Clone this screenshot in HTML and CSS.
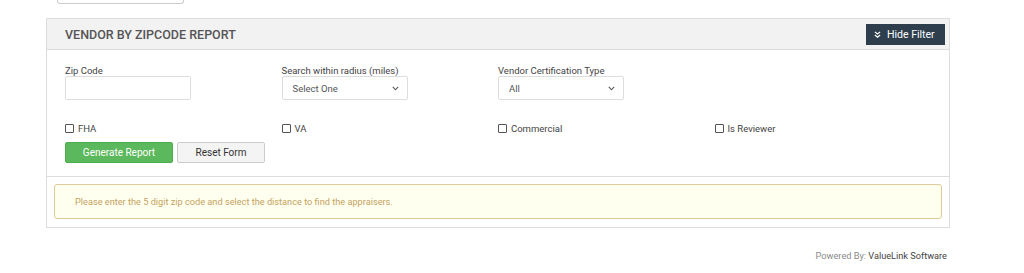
FILE: index.html
```html
<!DOCTYPE html>
<html lang="en">
<head>
<meta charset="UTF-8">
<meta name="viewport" content="width=device-width, initial-scale=1.0">
<title>Vendor By Zipcode Report</title>
<link rel="stylesheet" href="styles.css">
</head>
<body>

<div class="topbox"></div>

<div class="panel">
  <div class="panel-head">
    <div class="titulo">VENDOR BY ZIPCODE REPORT</div>
    <a href="#" class="btn-filtro">
      <svg width="7" height="7" viewBox="0 0 8 8"><path d="M1 1 L4 3.5 L7 1 M1 4.5 L4 7 L7 4.5" fill="none" stroke="#fff" stroke-width="1.4"/></svg>
      Hide Filter
    </a>
  </div>

  <div class="panel-body">
    <div class="fila">
      <div class="campo">
        <label>Zip Code</label>
        <input type="text" class="control">
      </div>
      <div class="campo">
        <label>Search within radius (miles)</label>
        <div class="control select">Select One
          <svg width="7" height="5" viewBox="0 0 7 5"><path d="M0.8 0.8 L3.5 3.8 L6.2 0.8" fill="none" stroke="#555" stroke-width="1.1"/></svg>
        </div>
      </div>
      <div class="campo">
        <label>Vendor Certification Type</label>
        <div class="control select">All
          <svg width="7" height="5" viewBox="0 0 7 5"><path d="M0.8 0.8 L3.5 3.8 L6.2 0.8" fill="none" stroke="#555" stroke-width="1.1"/></svg>
        </div>
      </div>
      <div class="campo"></div>
    </div>

    <div class="fila checks">
      <label class="check"><span class="caja"></span>FHA</label>
      <label class="check"><span class="caja"></span>VA</label>
      <label class="check"><span class="caja"></span>Commercial</label>
      <label class="check"><span class="caja"></span>Is Reviewer</label>
    </div>

    <div class="botones">
      <a href="#" class="boton verde">Generate Report</a>
      <a href="#" class="boton gris">Reset Form</a>
    </div>
  </div>

  <div class="panel-foot">
    <div class="aviso">Please enter the 5 digit zip code and select the distance to find the appraisers.</div>
  </div>
</div>

<div class="pie">Powered By: <span>ValueLink Software</span></div>

</body>
</html>
```

FILE: styles.css
```css
body {
  margin: 0;
  padding: 0;
  background: #fff;
  font-family: Roboto, "Liberation Sans", Arial, sans-serif;
  color: #444;
}

.topbox {
  margin-left: 57px;
  width: 125px;
  height: 3px;
  border: 1px solid #ccc;
  border-top: none;
  border-radius: 0 0 3px 3px;
}

.panel {
  margin: 14px 0 0 46px;
  width: 902px;
  border: 1px solid #ddd;
}

.panel-head {
  height: 30px;
  background-color: #f2f2f2;
  border-bottom: 1px solid #ddd;
  display: flex;
  justify-content: space-between;
  align-items: center;
  padding: 0 4px 0 18px;
}

.titulo {
  font-size: 12.5px;
  font-weight: 500;
  color: #555;
  padding-top: 1px;
}

.btn-filtro {
  display: flex;
  align-items: center;
  gap: 6px;
  height: 21px;
  width: 79px;
  box-sizing: border-box;
  padding-left: 8px;
  background-color: #2e3e4d;
  color: #fff;
  font-size: 10.5px;
  text-decoration: none;
  margin-top: 1px;
}

.panel-body {
  padding: 15px 18px 13px 18px;
  border-bottom: 1px solid #ddd;
}

.fila {
  display: grid;
  grid-template-columns: repeat(4, 1fr);
}

.campo label {
  display: block;
  font-size: 9.5px;
  color: #444;
  height: 11px;
  line-height: 11px;
}

.control {
  box-sizing: border-box;
  width: 126px;
  height: 24px;
  border: 1px solid #ddd;
  border-radius: 2px;
  background: #fff;
  font-family: inherit;
  font-size: 9.5px;
  color: #555;
  margin: 0;
}

.select {
  display: flex;
  justify-content: space-between;
  align-items: center;
  padding: 0 8px 0 10px;
}

.checks {
  margin-top: 23px;
}

.check {
  display: flex;
  align-items: center;
  gap: 4px;
  font-size: 9.5px;
  color: #444;
  height: 11px;
}

.caja {
  width: 7px;
  height: 7px;
  border: 1px solid #555;
  border-radius: 1px;
}

.botones {
  display: flex;
  gap: 4px;
  margin-top: 8px;
}

.boton {
  box-sizing: border-box;
  height: 21px;
  display: flex;
  align-items: center;
  justify-content: center;
  font-size: 10px;
  border-radius: 2px;
  text-decoration: none;
}

.verde {
  width: 108px;
  background-color: #5cb85c;
  border: 1px solid #4cae4c;
  color: #fff;
}

.gris {
  width: 88px;
  background-color: #f4f4f4;
  border: 1px solid #ccc;
  color: #333;
}

.panel-foot {
  padding: 7px 7px 8px 7px;
}

.aviso {
  height: 33px;
  display: flex;
  align-items: center;
  padding-left: 20px;
  background-color: #fffff0;
  border: 1px solid #dccb98;
  border-radius: 3px;
  font-size: 9.2px;
  color: #c4a261;
}

.pie {
  width: 947px;
  text-align: right;
  margin-top: 22px;
  font-size: 9.2px;
  color: #8a8a8a;
}

.pie span {
  color: #444;
}
```
